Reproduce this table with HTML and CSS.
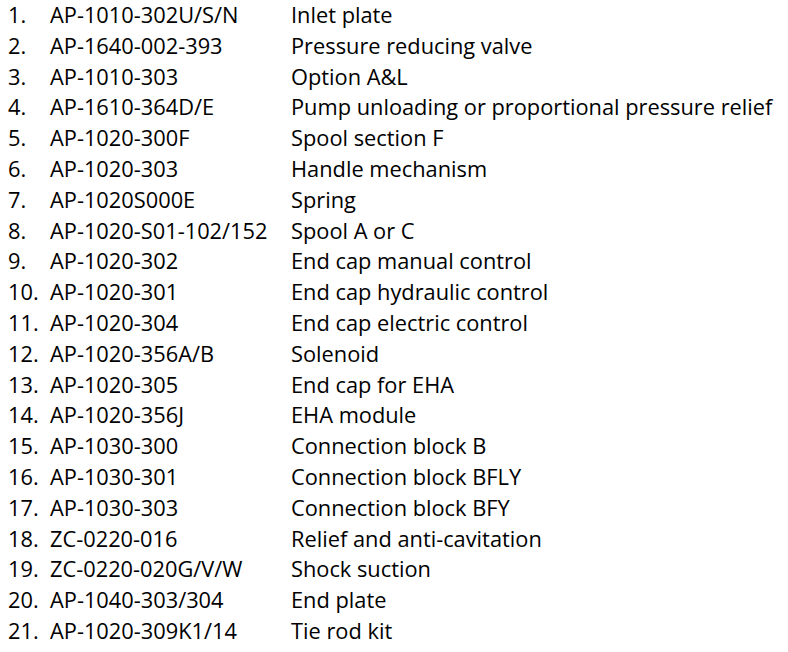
FILE: index.html
```html
<!DOCTYPE html>
<html>
<head>
<meta charset="utf-8">
<link rel="stylesheet" href="styles.css">
</head>
<body>
<ol class="parts">
<li class="row"><span class="num">1.</span><span class="code">AP-1010-302U/S/N</span><span class="desc">Inlet plate</span></li>
<li class="row"><span class="num">2.</span><span class="code">AP-1640-002-393</span><span class="desc">Pressure reducing valve</span></li>
<li class="row"><span class="num">3.</span><span class="code">AP-1010-303</span><span class="desc">Option A&amp;L</span></li>
<li class="row"><span class="num">4.</span><span class="code">AP-1610-364D/E</span><span class="desc">Pump unloading or proportional pressure relief</span></li>
<li class="row"><span class="num">5.</span><span class="code">AP-1020-300F</span><span class="desc">Spool section F</span></li>
<li class="row"><span class="num">6.</span><span class="code">AP-1020-303</span><span class="desc">Handle mechanism</span></li>
<li class="row"><span class="num">7.</span><span class="code">AP-1020S000E</span><span class="desc">Spring</span></li>
<li class="row"><span class="num">8.</span><span class="code">AP-1020-S01-102/152</span><span class="desc">Spool A or C</span></li>
<li class="row"><span class="num">9.</span><span class="code">AP-1020-302</span><span class="desc">End cap manual control</span></li>
<li class="row"><span class="num">10.</span><span class="code">AP-1020-301</span><span class="desc">End cap hydraulic control</span></li>
<li class="row"><span class="num">11.</span><span class="code">AP-1020-304</span><span class="desc">End cap electric control</span></li>
<li class="row"><span class="num">12.</span><span class="code">AP-1020-356A/B</span><span class="desc">Solenoid</span></li>
<li class="row"><span class="num">13.</span><span class="code">AP-1020-305</span><span class="desc">End cap for EHA</span></li>
<li class="row"><span class="num">14.</span><span class="code">AP-1020-356J</span><span class="desc">EHA module</span></li>
<li class="row"><span class="num">15.</span><span class="code">AP-1030-300</span><span class="desc">Connection block B</span></li>
<li class="row"><span class="num">16.</span><span class="code">AP-1030-301</span><span class="desc">Connection block BFLY</span></li>
<li class="row"><span class="num">17.</span><span class="code">AP-1030-303</span><span class="desc">Connection block BFY</span></li>
<li class="row"><span class="num">18.</span><span class="code">ZC-0220-016</span><span class="desc">Relief and anti-cavitation</span></li>
<li class="row"><span class="num">19.</span><span class="code">ZC-0220-020G/V/W</span><span class="desc">Shock suction</span></li>
<li class="row"><span class="num">20.</span><span class="code">AP-1040-303/304</span><span class="desc">End plate</span></li>
<li class="row"><span class="num">21.</span><span class="code">AP-1020-309K1/14</span><span class="desc">Tie rod kit</span></li>
</ol>
</body>
</html>
```
FILE: styles.css
```css
html, body {
  margin: 0;
  padding: 0;
  background: #ffffff;
}
body {
  font-family: "Open Sans", "Liberation Sans", sans-serif;
  font-size: 21.8px;
  color: #000000;
}
.parts {
  list-style: none;
  margin: 0;
  padding: 0 0 0 8px;
}
.row {
  display: grid;
  grid-template-columns: 42px 241px auto;
  height: 30.8px;
  line-height: 30px;
}
.num, .code, .desc {
  white-space: nowrap;
}
```
